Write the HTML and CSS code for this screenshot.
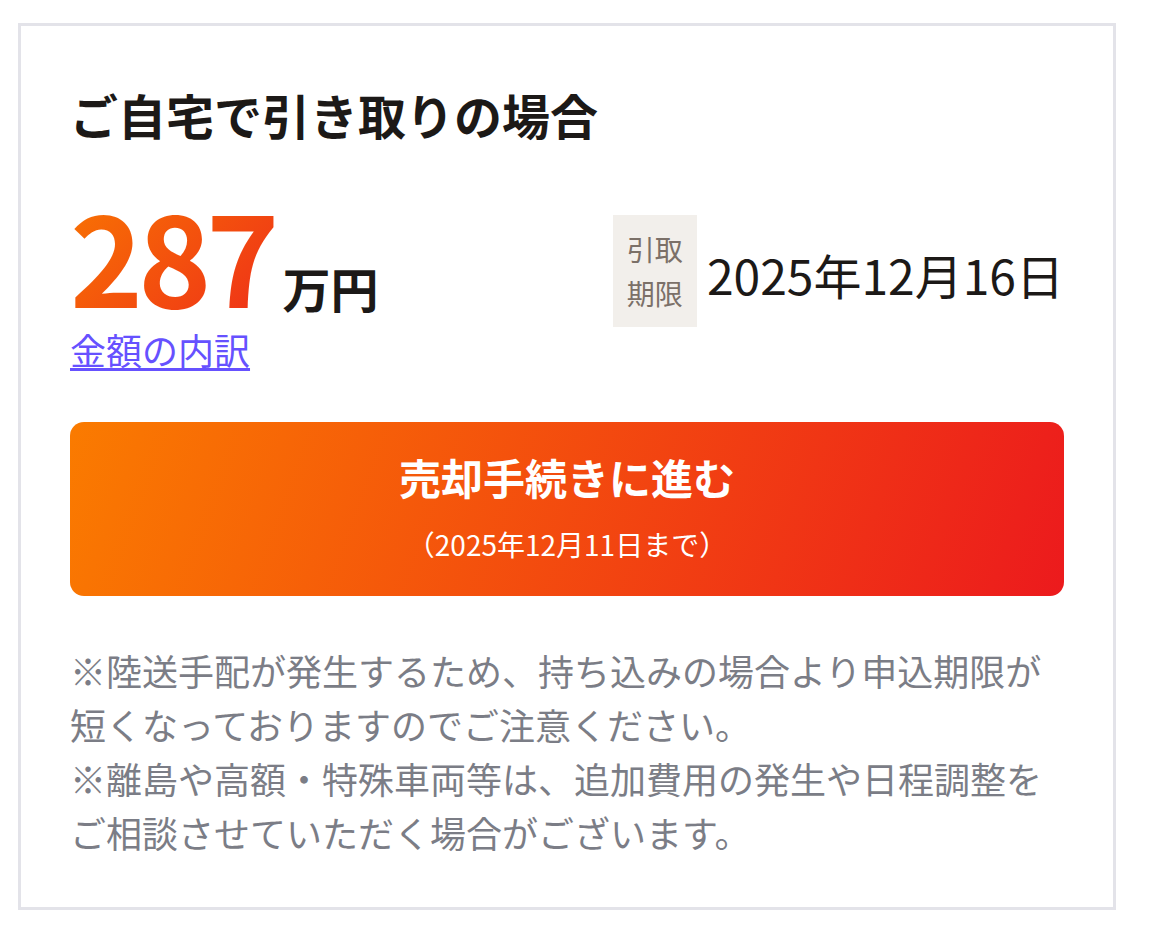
FILE: index.html
```html
<!DOCTYPE html>
<html lang="ja">
<head>
    <meta charset="UTF-8">
    <meta name="viewport" content="width=device-width, initial-scale=1.0">
    <title>ご自宅で引き取りの場合</title>
    <link rel="stylesheet" href="styles.css">
</head>
<body>
    <div class="plan-card">
        <h2 class="plan-title">ご自宅で引き取りの場合</h2>
        <div class="plan-summary">
            <div class="price-block">
                <div class="price"><span class="price-num">287</span><span class="price-unit">万円</span></div>
                <a class="price-detail" href="#">金額の内訳</a>
            </div>
            <div class="deadline">
                <div class="deadline-label">引取<br>期限</div>
                <div class="deadline-date">2025年12月16日</div>
            </div>
        </div>
        <a class="proceed-btn" href="#">
            <span class="proceed-main">売却手続きに進む</span>
            <span class="proceed-sub">（2025年12月11日まで）</span>
        </a>
        <div class="notes">
            <p>※陸送手配が発生するため、持ち込みの場合より申込期限が短くなっておりますのでご注意ください。</p>
            <p>※離島や高額・特殊車両等は、追加費用の発生や日程調整をご相談させていただく場合がございます。</p>
        </div>
    </div>
</body>
</html>
```
FILE: styles.css
```css
body {
    margin: 0;
    font-family: "Noto Sans CJK JP", "Noto Sans", sans-serif;
    background: #fff;
    color: #1c1917;
}
.plan-card {
    width: 1098px;
    margin: 23px 0 0 18px;
    border: 3px solid #e3e3e9;
    padding: 52px 49px 48px;
    box-sizing: border-box;
}
.plan-title {
    margin: 0;
    font-size: 48px;
    line-height: 72px;
    font-weight: 700;
}
.plan-summary {
    display: flex;
    justify-content: space-between;
    align-items: flex-start;
    margin-top: 42px;
}
.price {
    font-size: 124px;
    line-height: 1;
    font-weight: 700;
    white-space: nowrap;
}
.price-num {
    letter-spacing: -5px;
    background: linear-gradient(135deg, #f97a00, #ee2a1a);
    -webkit-background-clip: text;
    background-clip: text;
    color: transparent;
}
.price-unit {
    font-size: 48px;
    margin-left: 8px;
    color: #1c1917;
}
.price-detail {
    display: inline-block;
    margin-top: 6px;
    font-size: 36px;
    line-height: 54px;
    color: #6651ff;
    text-decoration: underline;
    text-underline-offset: 3px;
}
.deadline {
    display: flex;
    align-items: center;
    gap: 10px;
    margin-top: 23px;
}
.deadline-label {
    background: #f2efeb;
    color: #7b7068;
    font-size: 28px;
    line-height: 44px;
    padding: 12px 14px;
}
.deadline-date {
    font-size: 48px;
    line-height: 1.4;
    padding-top: 8px;
    white-space: nowrap;
}
.proceed-btn {
    display: flex;
    flex-direction: column;
    align-items: center;
    margin-top: 46px;
    padding: 23px 0 31px;
    border-radius: 14px;
    background: linear-gradient(110deg, #fa7b00, #ec1a1d);
    color: #fff;
    text-decoration: none;
}
.proceed-main {
    font-size: 42px;
    line-height: 63px;
    font-weight: 700;
}
.proceed-sub {
    margin-top: 15px;
    font-size: 28px;
    line-height: 42px;
}
.notes {
    margin-top: 47px;
    color: #7b7d86;
    font-size: 36px;
    line-height: 54px;
}
.notes p {
    margin: 0;
}
```
